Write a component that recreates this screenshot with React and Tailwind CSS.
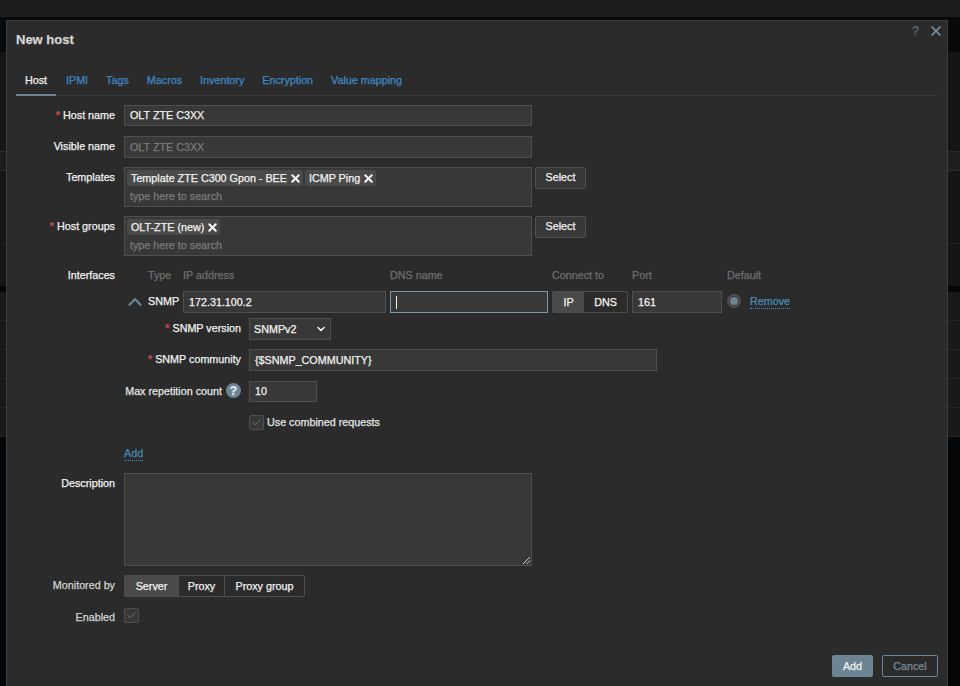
import { X, ChevronUp, ChevronDown, Check } from 'lucide-react';

const labelCls = 'w-[99px] mr-[9px] shrink-0 text-right text-[#f2f2f2] leading-[14px]';
const fieldCls = 'bg-[#383838] border border-[#4f4f4f] px-[5px] flex items-center text-[#f2f2f2]';

function Req() {
  return <span className="text-[#c04a4a] font-bold mr-[3px]">*</span>;
}

function Tag({ children }) {
  return (
    <span className="h-4 bg-[#4a4a4a] rounded-[2px] pl-1 pr-px flex items-center gap-[2px] text-[#f2f2f2] whitespace-nowrap">
      {children}
      <X className="w-[13px] h-[13px] text-white" strokeWidth={3.5} />
    </span>
  );
}

function MultiSelect({ tags }) {
  return (
    <div className="w-[408px] h-10 bg-[#383838] border border-[#4f4f4f] px-[2px] pt-[2px]">
      <div className="flex gap-[2px]">
        {tags.map(t => <Tag key={t}>{t}</Tag>)}
      </div>
      <div className="pl-[3px] mt-[2px] leading-[16px] text-[#7b7b7b]">type here to search</div>
    </div>
  );
}

function SelectBtn() {
  return (
    <button className="ml-[3px] w-[51px] h-[22px] bg-[#383838] border border-[#4f4f4f] rounded-[2px] text-[#f2f2f2] leading-[18px] pb-[2px]">
      Select
    </button>
  );
}

function Checkbox() {
  return (
    <span className="w-[15px] h-[15px] bg-[#383838] border border-[#4f4f4f] rounded-[2px] flex items-center justify-center shrink-0">
      <Check className="w-[11px] h-[11px] text-[#768d99]" strokeWidth={1.5} />
    </span>
  );
}

function Backdrop() {
  return (
    <div className="h-[686px] flex flex-col bg-[#050607]">
      <div className="h-[17px] bg-[#1c1c1c] shrink-0" />
      <div className="h-[35px] bg-[#08090a] shrink-0" />
      <div className="h-[99px] bg-[#151515] shrink-0" />
      <div className="h-5 bg-[#1e1e1e] border-y border-[#2b2b2b] shrink-0" />
      <div className="h-[73px] bg-[#151515] border-b border-[#232323] shrink-0" />
      <div className="h-[42px] bg-[#151515] shrink-0" />
      <div className="h-[6px] shrink-0" />
      {[0, 1, 2, 3, 4].map(i => (
        <div key={i} className="h-[29px] bg-[#191919] border-b border-[#262626] shrink-0" />
      ))}
    </div>
  );
}

const tabs = ['IPMI', 'Tags', 'Macros', 'Inventory', 'Encryption', 'Value mapping'];

export default function App() {
  return (
    <div
      className="relative w-[960px] h-[686px] overflow-hidden text-[10.75px] [-webkit-text-stroke:0.25px]"
      style={{ fontFamily: '"Liberation Sans", Arial, sans-serif' }}
    >
      <Backdrop />

      {/* dialog */}
      <div className="absolute left-[6px] top-[20px] w-[942px] h-[666px] bg-[#2b2b2b] border-l border-t border-r border-[#3d3d3d] pl-[9px] flex flex-col">
        <div className="absolute right-[3px] top-[2px] flex items-center gap-[9px] text-[#5f6f79]">
          <span className="text-[12px] leading-[14px]">?</span>
          <X className="w-[16px] h-[16px] text-[#7b95a5]" strokeWidth={2.5} />
        </div>

        <h4 className="mt-[11px] text-[13px] leading-[16px] font-bold text-[#d4d4d4]">New host</h4>

        {/* tabs */}
        <div className="mt-[19px] mr-[8px] h-[29px] border-b border-[#383838] flex items-start">
          <div className="h-[29px] w-10 border-b-2 border-[#6d8592] text-center pt-[6px] leading-[14px] text-[#f2f2f2]">Host</div>
          <div className="flex gap-[18px] pt-[6px] pl-[10px] text-[#3f89c5] leading-[14px]">
            {tabs.map(t => <span key={t}>{t}</span>)}
          </div>
        </div>

        {/* form */}
        <div className="mt-[9px] flex flex-col">
          <div className="flex">
            <div className={`${labelCls} pt-[3px]`}><Req />Host name</div>
            <div className={`${fieldCls} w-[408px] h-[21px]`}>OLT ZTE C3XX</div>
          </div>

          <div className="flex mt-[10px]">
            <div className={`${labelCls} pt-[3px]`}>Visible name</div>
            <div className="w-[408px] h-[22px] bg-[#383838] border border-[#4f4f4f] px-[5px] flex items-center text-[#7b7b7b]">OLT ZTE C3XX</div>
          </div>

          <div className="flex mt-[9px]">
            <div className={`${labelCls} pt-[3px]`}>Templates</div>
            <MultiSelect tags={['Template ZTE C300 Gpon - BEE', 'ICMP Ping']} />
            <SelectBtn />
          </div>

          <div className="flex mt-[9px]">
            <div className={`${labelCls} pt-[3px]`}><Req />Host groups</div>
            <MultiSelect tags={['OLT-ZTE (new)']} />
            <SelectBtn />
          </div>

          {/* interfaces */}
          <div className="flex mt-[12px]">
            <div className={labelCls}>Interfaces</div>
            <div className="flex flex-col">
              <div className="flex h-[14px] leading-[14px] text-[#6f6f6f]">
                <span className="ml-[24px] w-[35px]">Type</span>
                <span className="w-[207px]">IP address</span>
                <span className="w-[162px]">DNS name</span>
                <span className="w-[80px]">Connect to</span>
                <span className="w-[95px]">Port</span>
                <span>Default</span>
              </div>

              <div className="flex items-center mt-[9px] h-[22px]">
                <ChevronUp className="w-[22px] h-[22px] mr-[2px] text-[#6d8592]" strokeWidth={2.5} />
                <span className="w-[31px] text-[#f2f2f2] leading-[14px] -mt-[2px]">SNMP</span>
                <div className={`${fieldCls} w-[203px] ml-[4px] h-[22px]`}>172.31.100.2</div>
                <div className="w-[158px] h-[22px] ml-[4px] bg-[#383838] border border-[#7c98a8] flex items-center pl-[5px]">
                  <span className="w-px h-[13px] bg-[#f2f2f2]" />
                </div>
                <div className="ml-[4px] w-[76px] h-[22px] border border-[#4f4f4f] rounded-[2px] flex text-[#f2f2f2]">
                  <span className="w-[31px] bg-[#4a4a4a] flex items-center justify-center">IP</span>
                  <span className="flex-1 flex items-center justify-center">DNS</span>
                </div>
                <div className={`${fieldCls} w-[90px] ml-[4px] h-[22px]`}>161</div>
                <span className="ml-[5px] w-[14px] h-[14px] rounded-full border-[2px] border-[#4f4f4f] bg-[#383838] flex items-center justify-center -mt-[3px]">
                  <span className="w-2 h-2 rounded-full bg-[#6d8592]" />
                </span>
                <span className="ml-[9px] text-[#4a8db8] border-b border-dotted border-[#4a8db8] leading-[13px] -mt-[1px]">Remove</span>
              </div>

              <div className="flex items-center mt-[5px] h-[22px]">
                <div className="w-[117px] text-right text-[#f2f2f2] leading-[14px] -mt-[2px]"><Req />SNMP version</div>
                <div className="ml-[8px] w-[82px] h-[22px] bg-[#383838] border border-[#4f4f4f] flex items-center pl-[4px] pr-[3px] justify-between text-[#f2f2f2]">
                  SNMPv2
                  <ChevronDown className="w-[12px] h-[12px] text-white" strokeWidth={3} />
                </div>
              </div>

              <div className="flex items-center mt-[9px] h-[22px]">
                <div className="w-[117px] text-right text-[#f2f2f2] leading-[14px] -mt-[2px]"><Req />SNMP community</div>
                <div className={`${fieldCls} w-[408px] ml-[8px] h-[22px]`}>{'{$SNMP_COMMUNITY}'}</div>
              </div>

              <div className="flex items-center mt-[10px] h-[21px]">
                <div className="w-[117px] flex items-center justify-end gap-[4px] text-[#e6e6e6] leading-[14px] -mt-[2px] whitespace-nowrap">
                  Max repetition count
                  <span className="w-[15px] h-[15px] rounded-full bg-[#6d8592] text-[#e6eef2] text-[12px] font-bold flex items-center justify-center shrink-0">?</span>
                </div>
                <div className={`${fieldCls} w-[68px] ml-[8px] h-[21px]`}>10</div>
              </div>

              <div className="flex items-center mt-[12px] ml-[125px] gap-[3px] text-[#e6e6e6]">
                <Checkbox />
                Use combined requests
              </div>

              <div className="mt-[15px]">
                <span className="text-[#4a8db8] border-b border-dotted border-[#4a8db8] leading-[13px] inline-block">Add</span>
              </div>
            </div>
          </div>

          <div className="flex mt-[12px]">
            <div className={`${labelCls} pt-[3px]`}>Description</div>
            <div className="relative w-[408px] h-[93px] bg-[#383838] border border-[#4f4f4f]">
              <svg className="absolute right-0 bottom-0 w-[9px] h-[9px]" viewBox="0 0 9 9">
                <path d="M8 1 L1 8 M8 4.5 L4.5 8" stroke="#d0d0d0" strokeWidth="1" />
              </svg>
            </div>
          </div>

          <div className="flex mt-[9px]">
            <div className="w-[99px] mr-[9px] shrink-0 text-right text-[#d4d4d4] leading-[14px] pt-[3px]">Monitored by</div>
            <div className="h-[22px] border border-[#4f4f4f] rounded-[2px] flex text-[#f2f2f2]">
              <span className="w-[53px] bg-[#4a4a4a] flex items-center justify-center">Server</span>
              <span className="w-[47px] border-x border-[#4f4f4f] flex items-center justify-center">Proxy</span>
              <span className="w-[79px] flex items-center justify-center">Proxy group</span>
            </div>
          </div>

          <div className="flex mt-[11px]">
            <div className="w-[99px] mr-[9px] shrink-0 text-right text-[#d4d4d4] leading-[14px] pt-[2px]">Enabled</div>
            <Checkbox />
          </div>
        </div>

        {/* footer */}
        <div className="mt-[31px] mr-[9px] flex justify-end gap-[9px]">
          <button className="w-[41px] h-[22px] bg-[#6d8592] rounded-[2px] text-[#f2f2f2]">Add</button>
          <button className="w-[56px] h-[22px] border border-[#6d8592] rounded-[2px] text-[#768d99]">Cancel</button>
        </div>
      </div>
    </div>
  );
}
